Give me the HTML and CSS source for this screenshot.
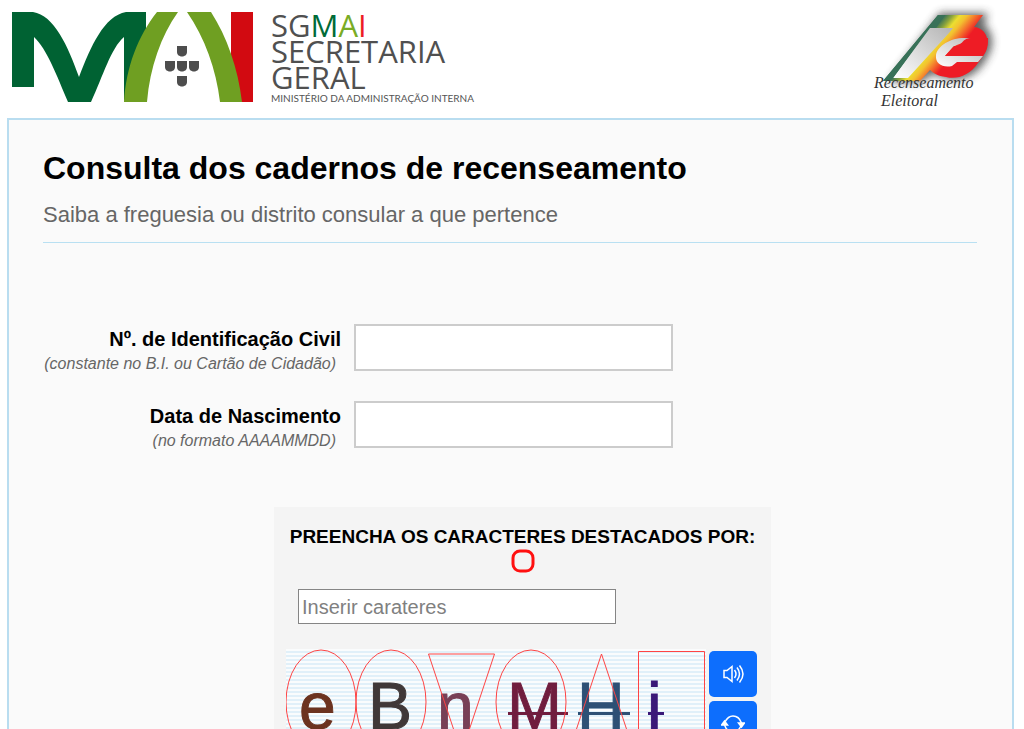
FILE: index.html
```html
<!DOCTYPE html>
<html lang="pt">
<head>
<meta charset="utf-8">
<meta name="viewport" content="width=device-width, initial-scale=1">
<title>Consulta dos cadernos de recenseamento</title>
<link rel="stylesheet" href="styles.css">
</head>
<body>
<header class="site-header">
  <div class="brand">
    <svg class="brand-mark" viewBox="0 0 242 91" aria-hidden="true">
      <path fill="#d20a11" d="M219 0h22v90h-22z"/>
      <path fill="#006233" d="M0 0H21C42 3 56 34 67 65C79 34 92 4 114 0H134V24L112 90V25C99 36 91 64 79 90H56C45 64 35 37 22 25V75H0z"/>
      <path fill="#6f9f22" d="M145 0h21C149 24 138 55 135 90H112C114 55 126 24 145 0zM175 0h24C215 25 226 56 230 90H208C204 57 193 26 175 0z"/>
      <path fill="#4d4d4d" d="M165 34h10v6c0 6-10 6-10 0zM153 49h10v6c0 6-10 6-10 0zM165 49h10v6c0 6-10 6-10 0zM177 49h10v6c0 6-10 6-10 0zM165 64h10v6c0 6-10 6-10 0z"/>
    </svg>
    <div class="brand-text">
      <span class="brand-line">SG<b class="green">M</b><b class="lime">A</b><b class="red">I</b></span>
      <span class="brand-line">SECRETARIA</span>
      <span class="brand-line">GERAL</span>
      <span class="brand-sub">MINISTÉRIO DA ADMINISTRAÇÃO INTERNA</span>
    </div>
  </div>
  <svg class="census-logo" viewBox="0 0 134 110" role="img" aria-label="Recenseamento Eleitoral">
    <defs>
      <linearGradient id="flag" gradientUnits="userSpaceOnUse" x1="46" y1="39" x2="77" y2="65">
        <stop offset=".13" stop-color="#387158"/>
        <stop offset=".28" stop-color="#8aa33c"/>
        <stop offset=".42" stop-color="#ecdf30"/>
        <stop offset=".56" stop-color="#f3c030"/>
        <stop offset=".72" stop-color="#f4762c"/>
        <stop offset=".92" stop-color="#ee1c25"/>
      </linearGradient>
      <linearGradient id="silver" x1="0" y1="1" x2="1" y2="0">
        <stop offset="0" stop-color="#fff"/><stop offset="1" stop-color="#b4b4b4"/>
      </linearGradient>
      <filter id="shadow" x="-30%" y="-30%" width="160%" height="160%"><feGaussianBlur stdDeviation="4"/></filter>
    </defs>
    <path filter="url(#shadow)" fill="#333" opacity=".75" d="M68 13H116L112 24Q126 38 116 56Q104 80 80 80L60 74L50 82H17z"/>
    <path fill="url(#flag)" d="M66 15H111L102 27C115 28 120 43 111 56L106 63C98 75 85 80 74 77C66 76 61 73 58 70L48 81H11z"/>
    <path fill="url(#silver)" d="M51 28H81L77 33L36 78H21L57 28z"/>
    <path fill="#387158" d="M66 15H73L64 28H58L21 78L11 81z"/>
    <path fill="url(#silver)" d="M100 39C84 35 66 44 64 55C63 64 71 68 80 66L85 62H106L111 56H73L81 47C86 44 91 43 100 39z"/>
    <path fill="#ee1c25" d="M82 46C92 46 88 39 99 38H116C116 46 115 51 111 56H73z"/>
    <text class="census-text" x="2" y="88">Recenseamento</text>
    <text class="census-text" x="9" y="106">Eleitoral</text>
  </svg>
</header>
<main class="panel">
  <div class="heading">
    <h1 class="title">Consulta dos cadernos de recenseamento</h1>
    <p class="subtitle">Saiba a freguesia ou distrito consular a que pertence</p>
  </div>
  <form class="form">
    <div class="field">
      <label class="field-label" for="civil-id">Nº. de Identificação Civil <small class="hint">(constante no B.I. ou Cartão de Cidadão)</small></label>
      <input class="field-input" id="civil-id" type="text">
    </div>
    <div class="field">
      <label class="field-label" for="birth">Data de Nascimento <small class="hint">(no formato AAAAMMDD)</small></label>
      <input class="field-input" id="birth" type="text">
    </div>
    <section class="captcha">
      <label class="captcha-title" for="captcha-code">PREENCHA OS CARACTERES DESTACADOS POR:</label>
      <svg class="captcha-shape" viewBox="0 0 24 24" aria-hidden="true"><rect x="2" y="2" width="20" height="20" rx="7"/></svg>
      <input class="captcha-input" id="captcha-code" type="text" placeholder="Inserir carateres">
      <div class="captcha-row">
        <svg class="captcha-image" viewBox="0 0 420 118" role="img" aria-label="Captcha">
          <defs><pattern id="lines" width="8" height="4" patternUnits="userSpaceOnUse"><path fill="#fafcfd" d="M0 0h8v4H0z"/><path fill="#e1f0f9" d="M0 2h8v2H0z"/></pattern></defs>
          <path fill="url(#lines)" d="M0 0h420v118H0z"/>
          <g class="captcha-letters">
            <text x="13" y="80" color="#6c3320">e</text>
            <text x="82" y="80" color="#403838">B</text>
            <text x="151" y="80" color="#784057">n</text>
            <text x="221" y="80" color="#701d3e">M</text>
            <text x="291" y="80" color="#2d5075">H</text>
            <text x="361" y="80" color="#3a1878">i</text>
          </g>
          <path stroke="#701d3e" stroke-width="3" d="M222 64.500h60"/>
          <path stroke="#2d5075" stroke-width="3" d="M292 64.500h52"/>
          <path stroke="#3a1878" stroke-width="3" d="M362 64.500h16"/>
          <g fill="none" stroke="#f44" stroke-width="1">
            <ellipse cx="35" cy="53" rx="35" ry="52"/>
            <ellipse cx="105" cy="53" rx="35" ry="52"/>
            <path d="M142.500 5H208.500L175.500 104z"/>
            <ellipse cx="245" cy="53" rx="35" ry="52"/>
            <path d="M315.500 5L282.500 104H348.500z"/>
            <path d="M352.500 2.500H418.500V104.500H352.500z"/>
          </g>
        </svg>
        <div class="captcha-actions">
          <button class="action" type="button" aria-label="Ouvir">
            <svg class="action-icon" viewBox="0 0 24 24"><path d="M3 8.500h3l5-4v15l-5-4H3zM13.500 8q3 4 0 8M16 5.500q5 6.500 0 13M18.500 3.500q7 8.500 0 17"/></svg>
          </button>
          <button class="action" type="button" aria-label="Atualizar">
            <svg class="action-icon" viewBox="0 0 24 24"><path d="M4 10Q7 4 12 4Q18 4 20.500 11M20 14Q17 20 12 20Q6 20 3.500 13"/><path fill="#fff" d="M17.500 11h6l-3 4zM.5 13h6l-3-4z"/></svg>
          </button>
        </div>
      </div>
    </section>
  </form>
</main>
</body>
</html>
```
FILE: styles.css
```css
* { box-sizing: border-box; }
html { scrollbar-width: none; }
body {
  margin: 0;
  background: #fff;
  color: #000;
  font-family: "Liberation Sans", Arial, sans-serif;
}
.site-header {
  display: flex;
  justify-content: space-between;
  align-items: flex-start;
  height: 118px;
  padding: 0 18px 0 12px;
}
.brand { display: flex; gap: 17px; padding-top: 12px; }
.brand-mark { width: 242px; height: 91px; }
.brand-text {
  display: flex;
  flex-direction: column;
  color: #505050;
  font-family: "Open Sans", sans-serif;
  white-space: nowrap;
}
.brand-line { font-size: 31px; line-height: 26px; }
.brand-line b { font-weight: 500; }
.brand-line .green { color: #006b38; }
.brand-line .lime { color: #7aac25; }
.brand-line .red { color: #ed1c24; }
.brand-sub { font: 10px/16px Lato, sans-serif; color: #555; }
.census-logo { width: 134px; height: 110px; overflow: visible; }
.census-text { font: italic 16px "Liberation Serif", serif; fill: #333; }
.panel {
  margin: 0 10px 8px 7px;
  padding: 24px 35px 40px 34px;
  border: 2px solid #b9ddf0;
  background: #fafafa;
}
.heading { padding-bottom: 4px; border-bottom: 1px solid #b9e0f2; }
.title { margin: 0; font-size: 32px; line-height: 48px; }
.subtitle { margin: 0; color: #666; font-size: 22px; line-height: 46px; }
.form {
  display: flex;
  flex-direction: column;
  gap: 31px;
  padding-top: 81px;
}
.field { display: flex; gap: 13px; height: 46px; }
.field-label {
  width: 298px;
  font-size: 20px;
  font-weight: bold;
  line-height: 30px;
  text-align: right;
  white-space: nowrap;
}
.hint {
  display: block;
  padding-right: 5px;
  color: #666;
  font-size: 16px;
  font-style: italic;
  font-weight: normal;
  line-height: 20px;
}
.field-input {
  width: 319px;
  height: 47px;
  padding: 0 8px;
  border: 2px solid #ccc;
  background: #fff;
  font: 20px "Liberation Sans", Arial, sans-serif;
}
.captcha {
  display: flex;
  flex-direction: column;
  width: 497px;
  margin: 29px 0 0 231px;
  padding: 18px 12px 20px;
  background: #f4f4f4;
}
.captcha-title {
  font-size: 19px;
  font-weight: bold;
  line-height: 24px;
  text-align: center;
  white-space: nowrap;
}
.captcha-shape {
  align-self: center;
  width: 24px;
  height: 24px;
  fill: none;
  stroke: #ff1010;
  stroke-width: 3;
}
.captcha-input {
  width: 318px;
  height: 35px;
  margin: 16px 0 25px 12px;
  padding: 2px 3px 0;
  border: 1px solid #858585;
  background: #fff;
  font: 20px "Liberation Sans", Arial, sans-serif;
}
.captcha-input::placeholder { color: #808080; }
.captcha-row { display: flex; gap: 3px; }
.captcha-image { width: 420px; height: 118px; }
.captcha-letters {
  font: 66px "Liberation Sans", Arial, sans-serif;
  fill: currentColor;
}
.captcha-letters text { fill: currentColor; stroke: currentColor; stroke-width: 1; }
.captcha-actions { display: flex; flex-direction: column; gap: 4px; padding-top: 2px; }
.action {
  display: grid;
  place-items: center;
  width: 48px;
  height: 46px;
  padding: 0;
  border: 0;
  border-radius: 5px;
  background: #0d6efd;
}
.action-icon {
  width: 24px;
  height: 24px;
  fill: none;
  stroke: #fff;
  stroke-width: 1.5;
}
```
